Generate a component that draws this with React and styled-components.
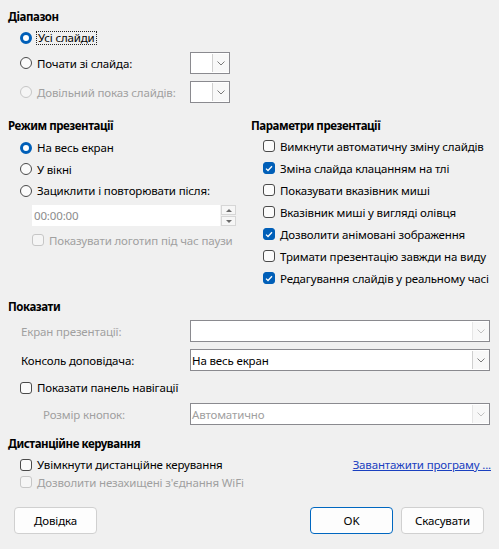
import styled, { createGlobalStyle } from "styled-components";

const GlobalStyle = createGlobalStyle`
  body {
    margin: 0;
    background: #f0f0f0;
    font-family: "Noto Sans", "Open Sans", sans-serif;
    font-size: 11.5px;
    letter-spacing: -0.15px;
    color: #000;
  }
`;

const Chevron = ({ disabled }) => (
  <svg width="8" height="5" viewBox="0 0 8 5">
    <path
      d="M0.5 0.5 L4 4 L7.5 0.5"
      fill="none"
      stroke={disabled ? "#c2c2c2" : "#7a7a7a"}
      strokeWidth="1"
    />
  </svg>
);

const Tick = () => (
  <svg width="8" height="7" viewBox="0 0 8 7">
    <path d="M1 3.6 L3 5.5 L7 1.2" fill="none" stroke="#fff" strokeWidth="1.3" />
  </svg>
);

const App = () => {
  return (
    <Dialog>
      <GlobalStyle />

      <Column $width={243}>
        <Heading>Діапазон</Heading>
        <Row $height={23} $indent={12}>
          <Radio $checked />
          <Focused>Усі слайди</Focused>
        </Row>
        <FieldRow $top={3} $combo="40px">
          <Row $height={22} $indent={12}>
            <Radio />
            <Label>Почати зі слайда:</Label>
          </Row>
          <Combo>
            <ComboText />
            <ArrowCell>
              <Chevron />
            </ArrowCell>
          </Combo>
        </FieldRow>
        <FieldRow $top={7} $combo="40px">
          <Row $height={22} $indent={12}>
            <Radio $disabled />
            <Label $disabled>Довільний показ слайдів:</Label>
          </Row>
          <Combo>
            <ComboText />
            <ArrowCell>
              <Chevron />
            </ArrowCell>
          </Combo>
        </FieldRow>
      </Column>

      <Columns>
        <Column $width={243}>
          <Heading>Режим презентації</Heading>
          <Row $height={21} $indent={12} $top={2}>
            <Radio $checked />
            <Label>На весь екран</Label>
          </Row>
          <Row $height={22} $indent={12}>
            <Radio />
            <Label>У вікні</Label>
          </Row>
          <Row $height={21} $indent={12}>
            <Radio />
            <Label>Зациклити і повторювати після:</Label>
          </Row>
          <SpinBox>
            <SpinField>00:00:00</SpinField>
            <SpinButtons>
              <SpinButton>
                <Arrow $up />
              </SpinButton>
              <SpinButton>
                <Arrow />
              </SpinButton>
            </SpinButtons>
          </SpinBox>
          <Row $height={20} $indent={24} $top={4}>
            <Check $disabled />
            <Label $disabled>Показувати логотип під час паузи</Label>
          </Row>
        </Column>

        <Column>
          <Heading>Параметри презентації</Heading>
          {[
            ["Вимкнути автоматичну зміну слайдів", false],
            ["Зміна слайда клацанням на тлі", true],
            ["Показувати вказівник миші", false],
            ["Вказівник миші у вигляді олівця", false],
            ["Дозволити анімовані зображення", true],
            ["Тримати презентацію завжди на виду", false],
            ["Редагування слайдів у реальному часі", true],
          ].map(([text, checked]) => (
            <Row key={text} $height={22} $indent={12}>
              <Check $checked={checked}>{checked && <Tick />}</Check>
              <Label>{text}</Label>
            </Row>
          ))}
        </Column>
      </Columns>

      <Heading $top={9}>Показати</Heading>
      <FieldRow $top={4} $combo="1fr">
        <Row $height={22} $indent={13}>
          <Label $disabled $gap={0}>
            Екран презентації:
          </Label>
        </Row>
        <Combo>
          <ComboText />
          <ArrowCell $disabled>
            <Chevron disabled />
          </ArrowCell>
        </Combo>
      </FieldRow>
      <FieldRow $top={7} $combo="1fr">
        <Row $height={22} $indent={13}>
          <Label $gap={0}>Консоль доповідача:</Label>
        </Row>
        <Combo>
          <ComboText>На весь екран</ComboText>
          <ArrowCell>
            <Chevron />
          </ArrowCell>
        </Combo>
      </FieldRow>
      <Row $height={21} $indent={12} $top={6}>
        <Check />
        <Label>Показати панель навігації</Label>
      </Row>
      <FieldRow $top={5} $combo="1fr">
        <Row $height={22} $indent={35}>
          <Label $disabled $gap={0}>
            Розмір кнопок:
          </Label>
        </Row>
        <Combo>
          <ComboText $disabled>Автоматично</ComboText>
          <ArrowCell $disabled>
            <Chevron disabled />
          </ArrowCell>
        </Combo>
      </FieldRow>

      <Heading $top={10}>Дистанційне керування</Heading>
      <Row $height={19} $indent={12} $top={2}>
        <Check />
        <Label>Увімкнути дистанційне керування</Label>
        <DownloadLink href="#">Завантажити програму ...</DownloadLink>
      </Row>
      <Row $height={16} $indent={12}>
        <Check $disabled />
        <Label $disabled>Дозволити незахищені з'єднання WiFi</Label>
      </Row>

      <ButtonBar>
        <Button>Довідка</Button>
        <Spacer />
        <Button $default>OK</Button>
        <Button>Скасувати</Button>
      </ButtonBar>
    </Dialog>
  );
};

const Dialog = styled.div`
  box-sizing: border-box;
  width: 499px;
  height: 549px;
  padding: 8px 9px 0 8px;
  display: flex;
  flex-direction: column;
`;

const Columns = styled.div`
  display: flex;
  margin-top: 14px;
`;

const Column = styled.div`
  display: flex;
  flex-direction: column;
  min-width: 0;
  ${({ $width }) => ($width ? `flex: none; width: ${$width}px;` : "flex: 1;")}
`;

const Heading = styled.div`
  height: 18px;
  line-height: 18px;
  font-weight: 700;
  letter-spacing: -0.45px;
  margin-top: ${({ $top }) => $top || 0}px;
`;

const Row = styled.div`
  display: flex;
  align-items: center;
  height: ${({ $height }) => $height}px;
  padding-left: ${({ $indent }) => $indent || 0}px;
  margin-top: ${({ $top }) => $top || 0}px;
  white-space: nowrap;
`;

const FieldRow = styled.div`
  display: grid;
  grid-template-columns: 182px ${({ $combo }) => $combo};
  align-items: center;
  margin-top: ${({ $top }) => $top || 0}px;
`;

const Label = styled.span`
  margin-left: ${({ $gap }) => ($gap === undefined ? 5 : $gap)}px;
  color: ${({ $disabled }) => ($disabled ? "#a0a0a0" : "#000")};
`;

const Focused = styled.span`
  margin-left: 4px;
  padding: 0 1px;
  line-height: 12px;
  border: 1px dotted #222;
`;

const Radio = styled.span`
  box-sizing: border-box;
  flex: none;
  width: 12px;
  height: 12px;
  border-radius: 50%;
  background: ${({ $disabled }) => ($disabled ? "#f5f5f5" : "#fbfbfb")};
  border: 1px solid ${({ $disabled }) => ($disabled ? "#c6c6c6" : "#4a4a4a")};

  ${({ $checked }) =>
    $checked &&
    `
    background: #fff;
    border: 3.5px solid #005fb8;
  `}
`;

const Check = styled.span`
  box-sizing: border-box;
  flex: none;
  width: 12px;
  height: 12px;
  border-radius: 3px;
  display: flex;
  align-items: center;
  justify-content: center;
  background: ${({ $checked, $disabled }) =>
    $checked ? "#005fb8" : $disabled ? "#f5f5f5" : "#fbfbfb"};
  border: 1px solid
    ${({ $checked, $disabled }) =>
      $checked ? "#005fb8" : $disabled ? "#c6c6c6" : "#4a4a4a"};
`;

const Combo = styled.div`
  box-sizing: border-box;
  height: 22px;
  display: flex;
  align-items: stretch;
  background: #fff;
  border: 1px solid #8a8a8f;
`;

const ComboText = styled.div`
  flex: 1;
  display: flex;
  align-items: center;
  padding-left: 1px;
  color: ${({ $disabled }) => ($disabled ? "#a0a0a0" : "#000")};
`;

const ArrowCell = styled.div`
  width: 16px;
  margin: 1px 0;
  display: flex;
  align-items: center;
  justify-content: center;
  background: #f8f8f8;
  border-left: 1px solid ${({ $disabled }) => ($disabled ? "#e6e6e6" : "#cfcfcf")};
`;

const SpinBox = styled.div`
  display: flex;
  height: 21px;
  margin: 4px 0 0 24px;
  width: 204px;
`;

const SpinField = styled.div`
  flex: 1;
  display: flex;
  align-items: center;
  padding-left: 2px;
  background: #fff;
  color: #8c8c8c;
`;

const SpinButtons = styled.div`
  width: 15px;
  margin-left: 1px;
  display: flex;
  flex-direction: column;
  gap: 1px;
`;

const SpinButton = styled.div`
  flex: 1;
  display: flex;
  align-items: center;
  justify-content: center;
  background: #f6f6f6;
  border: 1px solid #d6d6d6;
`;

const Arrow = styled.span`
  width: 0;
  height: 0;
  border-left: 3px solid transparent;
  border-right: 3px solid transparent;
  ${({ $up }) =>
    $up ? "border-bottom: 3px solid #6a6a6a;" : "border-top: 3px solid #6a6a6a;"}
`;

const DownloadLink = styled.a`
  margin-left: auto;
  margin-right: -1px;
  color: #1a40c0;
  text-decoration: underline;
`;

const ButtonBar = styled.div`
  display: flex;
  gap: 8px;
  margin-top: 17px;
  padding: 0 6px;
`;

const Spacer = styled.div`
  flex: 1;
`;

const Button = styled.button`
  box-sizing: border-box;
  width: 83px;
  height: 27px;
  padding: 0;
  font-family: inherit;
  font-size: 11.5px;
  letter-spacing: -0.15px;
  color: #000;
  background: #fdfdfd;
  border: 1px solid ${({ $default }) => ($default ? "#0067c0" : "#d0d0d0")};
  border-radius: 4px;
`;

export default App;
